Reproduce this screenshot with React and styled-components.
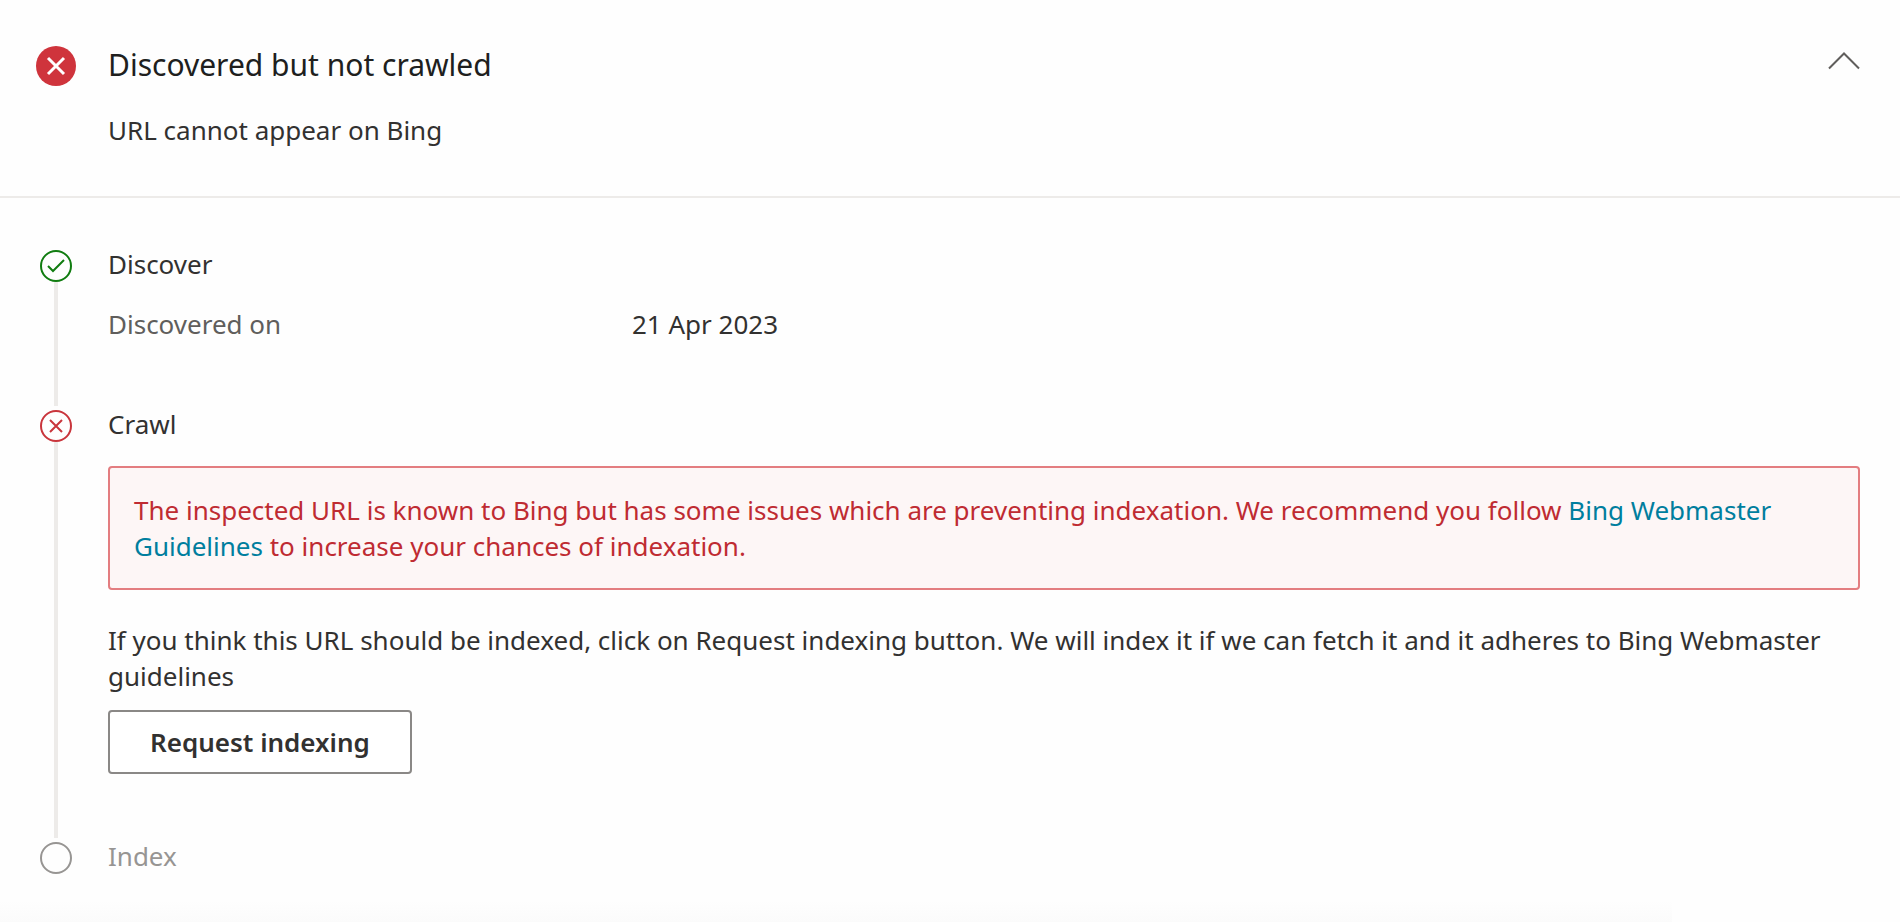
import { useState } from 'react';
import styled, { createGlobalStyle } from 'styled-components';

export default function App() {
  const [isOpen, setIsOpen] = useState(true);

  const toggleHandler = () => {
    setIsOpen(!isOpen);
  };

  return (
    <>
      <GlobalStyle />
      <StPage>
        <StHeader>
          <StStatusIcon viewBox='0 0 40 40' aria-hidden='true'>
            <circle cx='20' cy='20' r='20' fill='#cf343c' />
            <path d='M12 12L28 28M28 12L12 28' stroke='#ffffff' strokeWidth='3' />
          </StStatusIcon>
          <StHeaderText>
            <StTitle>Discovered but not crawled</StTitle>
            <StSubtitle>URL cannot appear on Bing</StSubtitle>
          </StHeaderText>
          <StToggle
            type='button'
            onClick={toggleHandler}
            aria-expanded={isOpen}
            aria-label='Toggle details'
          >
            <StChevron viewBox='0 0 32 18' $open={isOpen}>
              <path d='M1 16.5L16 1.5L31 16.5' />
            </StChevron>
          </StToggle>
        </StHeader>

        {isOpen ? (
          <StSteps>
            <StStep>
              <StRail>
                <StStepIcon viewBox='0 0 32 32' $cr='#107c10'>
                  <circle cx='16' cy='16' r='15' />
                  <path d='M8 16L13 21L24 10' />
                </StStepIcon>
                <StLine />
              </StRail>
              <StStepBody $bottom={64}>
                <StStepName>Discover</StStepName>
                <StDetails>
                  <StLabel>Discovered on</StLabel>
                  <StValue>21 Apr 2023</StValue>
                </StDetails>
              </StStepBody>
            </StStep>

            <StStep>
              <StRail>
                <StStepIcon viewBox='0 0 32 32' $cr='#c9353c'>
                  <circle cx='16' cy='16' r='15' />
                  <path d='M10 10L22 22M22 10L10 22' />
                </StStepIcon>
                <StLine />
              </StRail>
              <StStepBody $bottom={64}>
                <StStepName>Crawl</StStepName>
                <StAlert role='alert'>
                  The inspected URL is known to Bing but has some issues which
                  are preventing indexation. We recommend you follow{' '}
                  <StLink href='#guidelines'>Bing Webmaster Guidelines</StLink>{' '}
                  to increase your chances of indexation.
                </StAlert>
                <StHint>
                  If you think this URL should be indexed, click on Request
                  indexing button. We will index it if we can fetch it and it
                  adheres to Bing Webmaster guidelines
                </StHint>
                <StButton type='button'>Request indexing</StButton>
              </StStepBody>
            </StStep>

            <StStep>
              <StRail>
                <StStepIcon viewBox='0 0 32 32' $cr='#979593'>
                  <circle cx='16' cy='16' r='15' />
                </StStepIcon>
              </StRail>
              <StStepBody $bottom={0}>
                <StStepName $disabled>Index</StStepName>
              </StStepBody>
            </StStep>
          </StSteps>
        ) : null}
        <StShade />
      </StPage>
    </>
  );
}

const GlobalStyle = createGlobalStyle`
  * {
    box-sizing: border-box;
  }
  body {
    margin: 0;
    background-color: #fefefe;
    color: #323130;
    font-family: 'Noto Sans', 'Open Sans', sans-serif;
    font-size: 26px;
    line-height: 36px;
  }
`;

const StPage = styled.main`
  display: flex;
  flex-direction: column;
  min-height: 100vh;
`;

const StHeader = styled.header`
  display: flex;
  align-items: flex-start;
  padding: 46px 40px 48px 36px;
  border-bottom: 2px solid #edebe9;
`;

const StStatusIcon = styled.svg`
  flex-shrink: 0;
  width: 40px;
  height: 40px;
  margin-right: 32px;
`;

const StHeaderText = styled.div`
  flex: 1;
`;

const StTitle = styled.h1`
  margin: 0;
  color: #201f1e;
  font-size: 30px;
  font-weight: 400;
  line-height: 38px;
`;

const StSubtitle = styled.p`
  margin: 28px 0 0;
`;

const StToggle = styled.button`
  display: flex;
  padding: 6px 0;
  border: 0;
  background: none;
  cursor: pointer;
`;

const StChevron = styled.svg`
  width: 32px;
  height: 18px;
  fill: none;
  stroke: #605e5c;
  stroke-width: 2;
  transform: ${({ $open }) => ($open ? 'none' : 'rotate(180deg)')};
`;

const StSteps = styled.div`
  flex: 1;
  padding: 48px 40px 24px;
`;

const StStep = styled.section`
  display: flex;
  gap: 36px;
`;

const StRail = styled.div`
  display: flex;
  flex-direction: column;
  align-items: center;
  padding-top: 4px;
`;

const StStepIcon = styled.svg`
  flex-shrink: 0;
  width: 32px;
  height: 32px;
  fill: none;
  stroke: ${({ $cr }) => $cr};
  stroke-width: 2;
`;

const StLine = styled.div`
  flex: 1;
  width: 4px;
  background-color: #edebe9;
`;

const StStepBody = styled.div`
  flex: 1;
  padding-bottom: ${({ $bottom }) => $bottom}px;
`;

const StStepName = styled.h2`
  margin: 0;
  color: ${({ $disabled }) => ($disabled ? '#979593' : '#323130')};
  font-size: 26px;
  font-weight: 400;
  line-height: 36px;
`;

const StDetails = styled.dl`
  display: flex;
  margin: 24px 0 0;
`;

const StLabel = styled.dt`
  width: 524px;
  color: #605e5c;
`;

const StValue = styled.dd`
  margin: 0;
`;

const StAlert = styled.div`
  margin-top: 24px;
  padding: 24px;
  border: 2px solid #e37d80;
  border-radius: 4px;
  background-color: #fdf6f6;
  color: #bf2b32;
`;

const StLink = styled.a`
  color: #007e9e;
  text-decoration: none;
`;

const StHint = styled.p`
  margin: 32px 0 16px;
`;

const StButton = styled.button`
  height: 64px;
  padding: 0 40px;
  border: 2px solid #8a8886;
  border-radius: 4px;
  background-color: #ffffff;
  color: #323130;
  font-family: inherit;
  font-size: 26px;
  font-weight: 600;
  cursor: pointer;
`;

// soft edge of the next card
const StShade = styled.div`
  height: 22px;
  margin-right: 12%;
  background: linear-gradient(#fefefe, #fbfbfb);
`;
